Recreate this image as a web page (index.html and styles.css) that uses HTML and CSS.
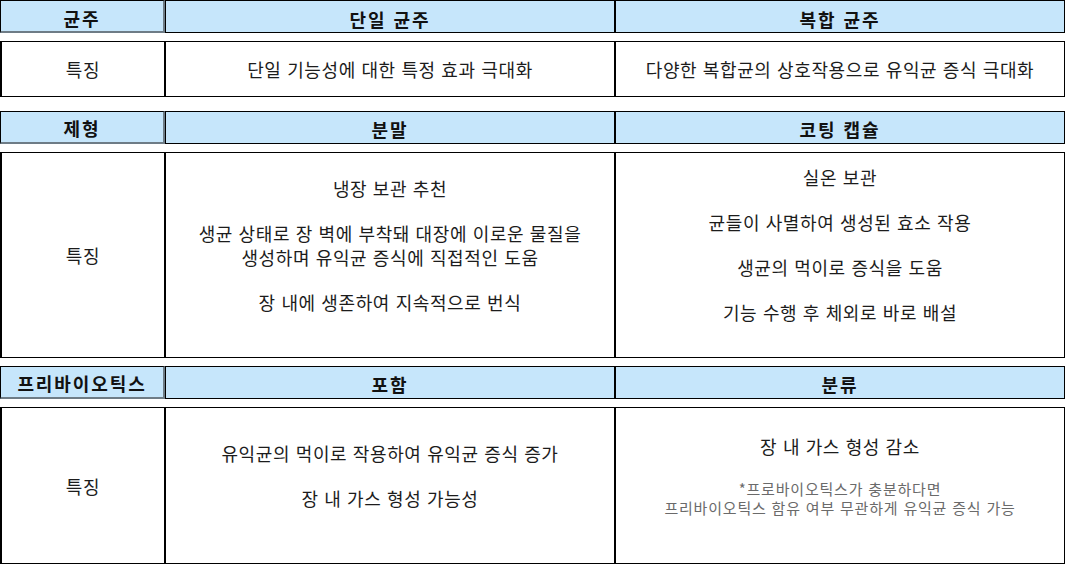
FILE: index.html
```html
<!DOCTYPE html>
<html lang="ko">
<head>
<meta charset="utf-8">
<title>균주 비교</title>
<link rel="stylesheet" href="styles.css">
</head>
<body>
<div class="page">
  <section class="table t1">
    <div class="row head">
      <div class="cell first">균주</div>
      <div class="cell">단일 균주</div>
      <div class="cell">복합 균주</div>
    </div>
    <div class="row body">
      <div class="cell label">특징</div>
      <div class="cell"><p>단일 기능성에 대한 특정 효과 극대화</p></div>
      <div class="cell"><p>다양한 복합균의 상호작용으로 유익균 증식 극대화</p></div>
    </div>
  </section>

  <section class="table t2">
    <div class="row head">
      <div class="cell first">제형</div>
      <div class="cell">분말</div>
      <div class="cell">코팅 캡슐</div>
    </div>
    <div class="row body">
      <div class="cell label">특징</div>
      <div class="cell padded">
        <p>냉장 보관 추천</p>
        <p>생균 상태로 장 벽에 부착돼 대장에 이로운 물질을<br>생성하며 유익균 증식에 직접적인 도움</p>
        <p>장 내에 생존하여 지속적으로 번식</p>
      </div>
      <div class="cell padded">
        <p>실온 보관</p>
        <p>균들이 사멸하여 생성된 효소 작용</p>
        <p>생균의 먹이로 증식을 도움</p>
        <p>기능 수행 후 체외로 바로 배설</p>
      </div>
    </div>
  </section>

  <section class="table t3">
    <div class="row head">
      <div class="cell first">프리바이오틱스</div>
      <div class="cell">포함</div>
      <div class="cell">분류</div>
    </div>
    <div class="row body">
      <div class="cell label">특징</div>
      <div class="cell padded">
        <p>유익균의 먹이로 작용하여 유익균 증식 증가</p>
        <p>장 내 가스 형성 가능성</p>
      </div>
      <div class="cell padded">
        <p>장 내 가스 형성 감소</p>
        <p class="note">*프로바이오틱스가 충분하다면<br>프리바이오틱스 함유 여부 무관하게 유익균 증식 가능</p>
      </div>
    </div>
  </section>
</div>
</body>
</html>
```

FILE: styles.css
```css
html, body {
  margin: 0;
  padding: 0;
  background: #ffffff;
}

body {
  font-family: "Noto Sans CJK KR", "Noto Sans", sans-serif;
  color: #1c1c1c;
  font-size: 18px;
  letter-spacing: 0.6px;
}

.page {
  width: 1065px;
  display: flex;
  flex-direction: column;
}

.table {
  display: flex;
  flex-direction: column;
  gap: 8px;
}

.t1 { margin-bottom: 14px; }
.t2 { margin-bottom: 8px; }

.row {
  display: grid;
  grid-template-columns: 165px 450px 450px;
}

.cell {
  box-sizing: border-box;
  border: 1px solid #000;
  display: flex;
  flex-direction: column;
  align-items: center;
  justify-content: center;
  text-align: center;
}

.head .cell {
  height: 33px;
  background: #c6e6fb;
  font-weight: 700;
  font-size: 18px;
  letter-spacing: 1.9px;
  color: #111;
  padding-top: 2px;
}

.head .cell.first {
  border-right: 2px solid #6e7c86;
  border-bottom: 2px solid #6e7c86;
}

.t1 .head .cell {
  padding-top: 4px;
}

.body .cell {
  line-height: 24px;
}

.body .cell.label {
  border-left-width: 2px;
}

.t1 .body .cell { height: 56px; }
.t2 .body .cell { height: 206px; }
.t3 .body .cell { height: 157px; }

.cell p {
  margin: 0;
}

.cell p + p {
  margin-top: 21px;
}

.cell.padded {
  padding-bottom: 21px;
}

.note {
  font-size: 15px;
  letter-spacing: 0.8px;
  line-height: 19px;
  color: #6a6a6a;
}
```
